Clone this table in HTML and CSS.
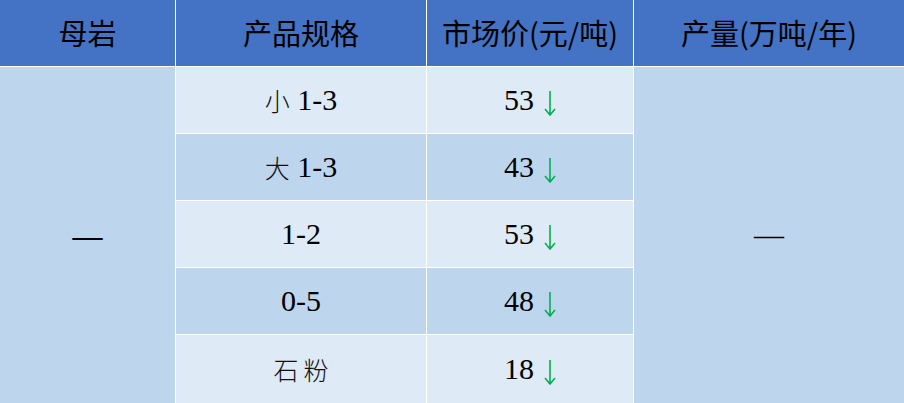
FILE: index.html
```html
<!DOCTYPE html>
<html lang="zh">
<head>
<meta charset="utf-8">
<link rel="stylesheet" href="styles.css">
</head>
<body>
<div class="table">
  <div class="cell head">母岩</div>
  <div class="cell head">产品规格</div>
  <div class="cell head">市场价(元/吨)</div>
  <div class="cell head">产量(万吨/年)</div>

  <div class="cell span col1 dark dash-bold">—</div>
  <div class="cell span col4 dark dash-thin">—</div>

  <div class="cell light body"><span class="cjk">小</span> 1-3</div>
  <div class="cell light body">53<svg class="down" viewBox="0 0 12 25" width="12" height="25"><path d="M6 0 V24 M1 18 L6 24 L11 18" fill="none" stroke="#00b050" stroke-width="1.6"/></svg></div>

  <div class="cell dark body"><span class="cjk">大</span> 1-3</div>
  <div class="cell dark body">43<svg class="down" viewBox="0 0 12 25" width="12" height="25"><path d="M6 0 V24 M1 18 L6 24 L11 18" fill="none" stroke="#00b050" stroke-width="1.6"/></svg></div>

  <div class="cell light body">1-2</div>
  <div class="cell light body">53<svg class="down" viewBox="0 0 12 25" width="12" height="25"><path d="M6 0 V24 M1 18 L6 24 L11 18" fill="none" stroke="#00b050" stroke-width="1.6"/></svg></div>

  <div class="cell dark body">0-5</div>
  <div class="cell dark body">48<svg class="down" viewBox="0 0 12 25" width="12" height="25"><path d="M6 0 V24 M1 18 L6 24 L11 18" fill="none" stroke="#00b050" stroke-width="1.6"/></svg></div>

  <div class="cell light body"><span class="cjk wide">石粉</span></div>
  <div class="cell light body">18<svg class="down" viewBox="0 0 12 25" width="12" height="25"><path d="M6 0 V24 M1 18 L6 24 L11 18" fill="none" stroke="#00b050" stroke-width="1.6"/></svg></div>
</div>
</body>
</html>
```
FILE: styles.css
```css
html, body {
  margin: 0;
  padding: 0;
  background: #ffffff;
}
.table {
  width: 904px;
  height: 403px;
  display: grid;
  grid-template-columns: 175px 250px 206px 1fr;
  grid-template-rows: 66px repeat(4, 66px) 1fr;
  gap: 1px;
  background: #ffffff;
  overflow: hidden;
}
.cell {
  display: flex;
  align-items: center;
  justify-content: center;
  color: #000000;
}
.head {
  background: #4472c4;
  font-family: "Noto Sans CJK SC", "Noto Sans", sans-serif;
  font-size: 29px;
  padding-bottom: 2px;
}
.body {
  font-family: "Liberation Serif", "Times New Roman", serif;
  font-size: 30px;
  white-space: pre;
}
.cjk {
  font-family: "Noto Sans CJK SC", sans-serif;
  font-weight: 300;
  font-size: 25px;
  color: #111111;
}
.wide {
  letter-spacing: 5px;
  margin-right: -5px;
}
.light {
  background: #deeaf6;
}
.dark {
  background: #bdd6ee;
}
.span {
  grid-row: 2 / 7;
  font-family: "Liberation Serif", serif;
  font-size: 30px;
}
.col1 {
  grid-column: 1;
}
.col4 {
  grid-column: 4;
}
.dash-bold {
  font-weight: bold;
  padding-top: 2px;
}
.dash-thin {
  font-weight: normal;
}
.down {
  margin-left: 10px;
  margin-top: 6px;
}
```
